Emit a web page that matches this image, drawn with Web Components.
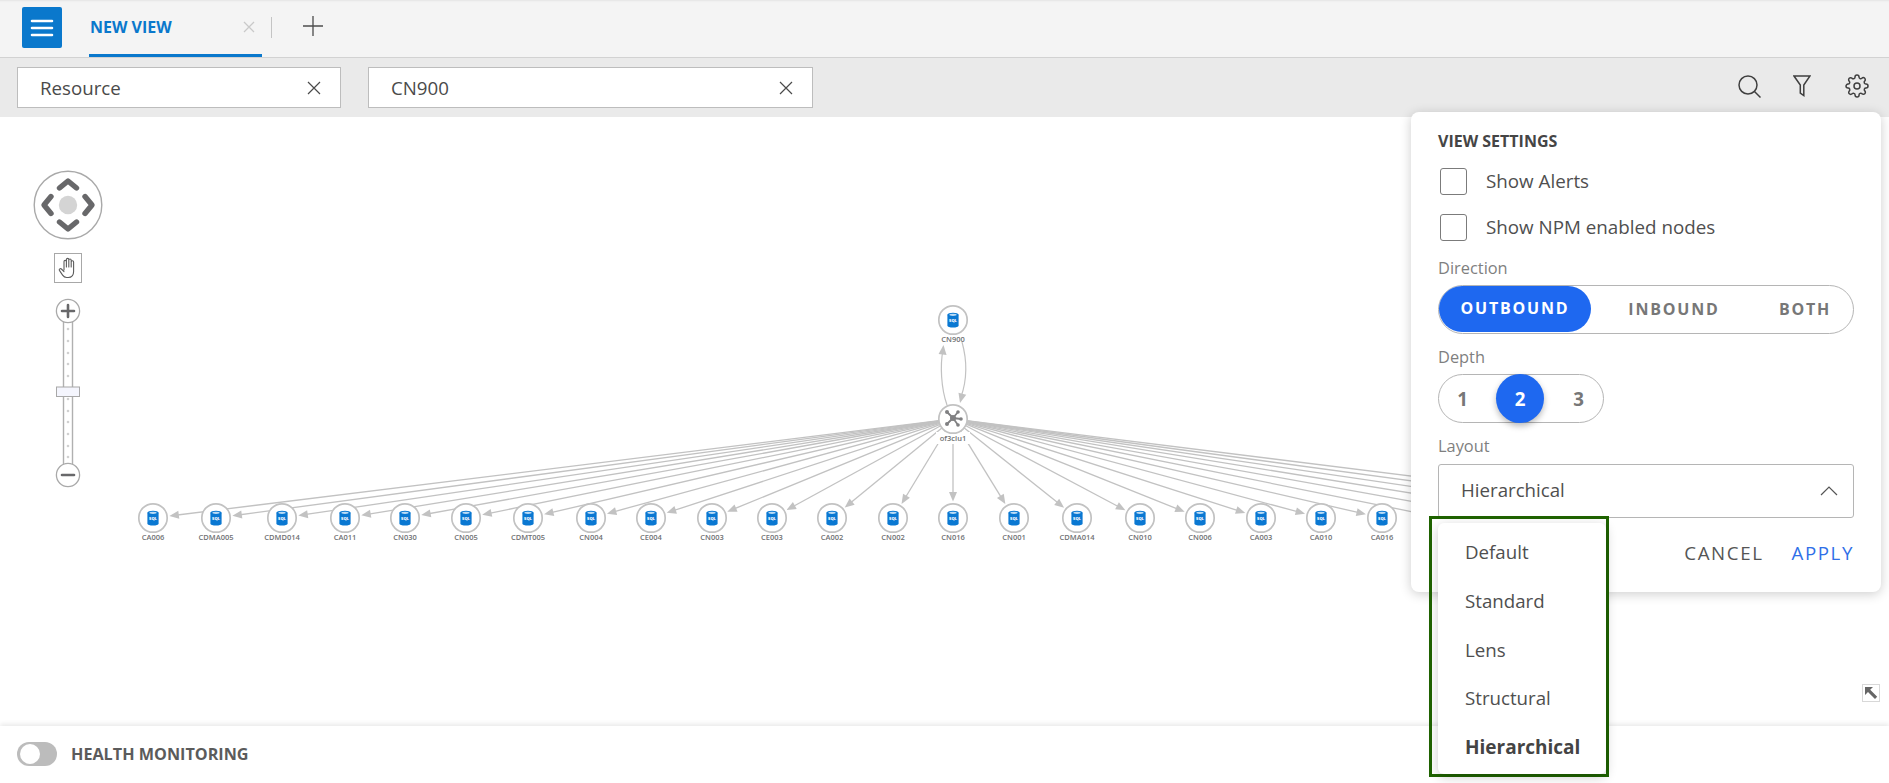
<!DOCTYPE html>
<html>
<head>
<meta charset="utf-8">
<title>New View</title>
<style>
  html, body { margin: 0; height: 100%; overflow: hidden; }
  body { font-family: "Open Sans", "Noto Sans", sans-serif; color: #4a4a4a; background: #fff; }
</style>
</head>
<body>
<topo-app></topo-app>
<script>
const FONT = `"Open Sans", "Noto Sans", sans-serif`;

function component(name, html, setup) {
  const template = Object.assign(document.createElement('template'), { innerHTML: html });
  customElements.define(name, class extends HTMLElement {
    constructor() {
      super();
      this.attachShadow({ mode: 'open' });
      this.shadowRoot.appendChild(template.content.cloneNode(true));
    }
    connectedCallback() {
      if (setup) setup(this);
    }
  });
}

component('tab-bar', `
  <style>
    :host { display: flex; align-items: flex-start; height: 57px; box-sizing: content-box;
      background: #f4f4f4; border-bottom: 1px solid #d2d2d2; padding-left: 22px;
      box-shadow: inset 0 3px 2px -2px #e4e4e4; }
    .menu { width: 40px; height: 41px; margin-top: 7px; background: #0a78cc; border-radius: 2px;
      display: flex; align-items: center; justify-content: center; }
    .tab { width: 173px; height: 57px; box-sizing: border-box; margin-left: 27px; padding: 16px 0 0 1px;
      border-bottom: 3px solid #0a78cc; color: #0a78cc; font: 700 16px/22px ${FONT}; position: relative; }
    .close { margin: 21px 0 0 -19px; width: 12px; height: 12px; position: relative; }
    .sep { width: 1px; height: 21px; background: #c4c4c4; margin: 17px 0 0 16px; }
    .plus { margin: 16px 0 0 31px; width: 20px; height: 20px; }
  </style>
  <div class="menu">
    <svg width="24" height="20" viewBox="0 0 24 20"><path d="M2 3h20M2 10h20M2 17h20" stroke="#fff" stroke-width="2.6" stroke-linecap="round"/></svg>
  </div>
  <div class="tab">NEW VIEW</div>
  <svg class="close" viewBox="0 0 12 12"><path d="M1 1l10 10M11 1L1 11" stroke="#c9c9c9" stroke-width="1.3"/></svg>
  <div class="sep"></div>
  <svg class="plus" viewBox="0 0 20 20"><path d="M0 10h20M10 0v20" stroke="#4c4c4c" stroke-width="1.3"/></svg>
`);

component('filter-chip', `
  <style>
    :host { display: flex; align-items: center; justify-content: space-between; height: 41px;
      box-sizing: border-box; background: #fff; border: 1px solid #bdbdbd; padding: 0 19px 0 22px;
      font: 400 18.7px/24px ${FONT}; color: #4a4a4a; }
    svg { width: 14px; height: 14px; }
  </style>
  <slot></slot>
  <svg viewBox="0 0 14 14"><path d="M1 1l12 12M13 1L1 13" stroke="#4a4a4a" stroke-width="1.2"/></svg>
`);

component('filter-bar', `
  <style>
    :host { display: flex; align-items: center; height: 59px; box-sizing: border-box; background: #eaeaea; padding: 0 20px 0 17px; }
    filter-chip:nth-of-type(1) { width: 324px; }
    filter-chip:nth-of-type(2) { width: 445px; margin-left: 27px; }
    .tools { margin-left: auto; display: flex; align-items: center; gap: 34px; margin-top: -3px; }
    .tools svg:first-child { margin-right: -2px; }
    svg { display: block; fill: none; stroke: #3f3f3f; stroke-width: 1.5; }
  </style>
  <filter-chip>Resource</filter-chip>
  <filter-chip>CN900</filter-chip>
  <div class="tools">
    <svg width="23" height="23" viewBox="0 0 23 23"><circle cx="10" cy="10" r="9"/><path d="M16.500 16.500l6 6"/></svg>
    <svg width="18" height="22" viewBox="0 0 18 22"><path d="M1 1h16l-6.200 9v10.500L7.300 18v-8z"/></svg>
    <svg width="24" height="24" viewBox="0 0 24 24" stroke-width="1.4"><circle cx="12" cy="12" r="3"/><path d="M19.4 15a1.65 1.65 0 0 0 .33 1.82l.06.06a2 2 0 0 1 0 2.83 2 2 0 0 1-2.83 0l-.06-.06a1.65 1.65 0 0 0-1.82-.33 1.65 1.65 0 0 0-1 1.51V21a2 2 0 0 1-2 2 2 2 0 0 1-2-2v-.09A1.65 1.65 0 0 0 9 19.4a1.65 1.65 0 0 0-1.82.33l-.06.06a2 2 0 0 1-2.83 0 2 2 0 0 1 0-2.83l.06-.06a1.65 1.65 0 0 0 .33-1.82 1.65 1.65 0 0 0-1.51-1H3a2 2 0 0 1-2-2 2 2 0 0 1 2-2h.09A1.65 1.65 0 0 0 4.6 9a1.65 1.65 0 0 0-.33-1.82l-.06-.06a2 2 0 0 1 0-2.83 2 2 0 0 1 2.83 0l.06.06a1.65 1.65 0 0 0 1.82.33H9a1.65 1.65 0 0 0 1-1.51V3a2 2 0 0 1 2-2 2 2 0 0 1 2 2v.09a1.65 1.65 0 0 0 1 1.51 1.65 1.65 0 0 0 1.82-.33l.06-.06a2 2 0 0 1 2.83 0 2 2 0 0 1 0 2.83l-.06.06a1.65 1.65 0 0 0-.33 1.82V9a1.65 1.65 0 0 0 1.51 1H21a2 2 0 0 1 2 2 2 2 0 0 1-2 2h-.09a1.65 1.65 0 0 0-1.51 1z"/></svg>
  </div>
`);

// graph coordinates are relative to the canvas, which starts at y=117
const TOP = 117;
const HUB = { x: 953, y: 419 - TOP };
const ROW_Y = 518 - TOP;
const LEAVES = [
  ['CA006', 153], ['CDMA005', 216], ['CDMD014', 282], ['CA011', 345], ['CN030', 405], ['CN005', 466],
  ['CDMT005', 528], ['CN004', 591], ['CE004', 651], ['CN003', 712], ['CE003', 772], ['CA002', 832],
  ['CN002', 893], ['CN016', 953], ['CN001', 1014], ['CDMA014', 1077], ['CN010', 1140], ['CN006', 1200],
  ['CA003', 1261], ['CA010', 1321], ['CA016', 1382],
];
// these run on under the settings panel
const HIDDEN_TARGETS = [1443, 1504, 1565, 1626, 1687, 1748];
const EDGE = '#c2c2c2';

function arrow(tx, ty, ux, uy) {
  const len = 9.5, half = 4;
  const bx = tx - ux * len, by = ty - uy * len;
  return `<polygon points="${tx},${ty} ${bx - uy * half},${by + ux * half} ${bx + uy * half},${by - ux * half}" fill="${EDGE}"/>`;
}

function edgeTo(x, y) {
  const dx = x - HUB.x, dy = y - HUB.y, d = Math.hypot(dx, dy);
  const ux = dx / d, uy = dy / d;
  const sx = HUB.x + ux * 14, sy = HUB.y + uy * 14;
  const tx = x - ux * 16.5, ty = y - uy * 16.5;
  return `<line x1="${sx}" y1="${sy}" x2="${tx - ux * 6}" y2="${ty - uy * 6}" stroke="${EDGE}" stroke-width="1.3"/>` + arrow(tx, ty, ux, uy);
}

function dbNode(label, x, y) {
  return `<g transform="translate(${x} ${y})">
    <circle r="14.2" fill="#fff" stroke="#c2c2c2" stroke-width="1.7"/>
    <path d="M-5.600 -5.200v10.600c0 1.300 2.500 2.200 5.600 2.200s5.600-.9 5.600-2.200v-10.600z" fill="#0a78d2"/>
    <ellipse cy="-5.2" rx="5.6" ry="2.1" fill="#0a78d2"/>
    <ellipse cy="-5.2" rx="3.6" ry="1.1" fill="#bcdcf5"/>
    <text y="1.8" text-anchor="middle" font-size="4" font-weight="800" fill="#fff">SQL</text>
    <text y="21.8" text-anchor="middle" font-size="7.5" font-weight="600" fill="#6f7173">${label}</text>
  </g>`;
}

component('topo-graph', `
  <style>
    :host { display: block; position: absolute; inset: 0; }
    svg { display: block; width: 100%; height: 100%; font-family: ${FONT}; }
  </style>
  <svg></svg>
`, (el) => {
  const edges = LEAVES.map(([, x]) => edgeTo(x, ROW_Y)).join('') +
    HIDDEN_TARGETS.map((x) => edgeTo(x, ROW_Y)).join('');
  const loops = `
    <path d="M947 ${405 - TOP}C941 ${388 - TOP} 940 ${365 - TOP} 943 ${350 - TOP}" fill="none" stroke="${EDGE}" stroke-width="1.2"/>
    ${arrow(943.5, 345 - TOP, 0.1, -1)}
    <path d="M962 ${342 - TOP}C967 ${360 - TOP} 967 ${380 - TOP} 961 ${397 - TOP}" fill="none" stroke="${EDGE}" stroke-width="1.2"/>
    ${arrow(960, 403 - TOP, -0.25, 0.97)}`;
  const hub = `<g transform="translate(${HUB.x} ${HUB.y})">
    <rect x="-17" y="13" width="34" height="12" fill="#fff"/>
    <circle r="14.2" fill="#fff" stroke="#c2c2c2" stroke-width="1.7"/>
    <g transform="translate(0 -1)" fill="#808082">
      <path d="M-6 -6L0 0M5 -6L0 0M-6 6L0 0M5 7L0 0M0 0L8 1" stroke="#808082" stroke-width="1.8"/>
      <circle r="3"/>
      <circle cx="-6" cy="-6" r="2"/><circle cx="5" cy="-6" r="1.800"/>
      <circle cx="-6" cy="6" r="2"/><circle cx="5" cy="7" r="1.800"/>
      <circle cx="8" cy="1" r="1.800"/>
    </g>
    <text y="21.8" text-anchor="middle" font-size="7.5" font-weight="600" fill="#6f7173">of3clu1</text>
  </g>`;
  const nodes = LEAVES.map(([label, x]) => dbNode(label, x, ROW_Y)).join('') + dbNode('CN900', HUB.x, 320 - TOP);
  el.shadowRoot.querySelector('svg').innerHTML = edges + loops + nodes + hub;
});

component('map-controls', `
  <style>
    :host { display: flex; flex-direction: column; align-items: center; position: absolute; left: 34px; top: 53px; width: 68px; }
    svg { display: block; }
    .hand { margin-top: 13px; width: 28px; height: 30px; box-sizing: border-box; border: 1px solid #a8a8a8; background: #fff;
      display: flex; align-items: center; justify-content: center; }
    .zoom { margin-top: 15px; }
  </style>
  <svg width="70" height="70" viewBox="0 0 70 70">
    <circle cx="35" cy="35" r="33.800" fill="#fff" stroke="#a9a9a9" stroke-width="1.4"/>
    <circle cx="35" cy="35" r="9.200" fill="#d4d4d4"/>
    <path d="M26.500 18l8.500-7 8.500 7M26.500 52l8.500 7 8.500-7M18 26.500l-7 8.500 7 8.500M52 26.500l7 8.500-7 8.500" fill="none" stroke="#68686a" stroke-width="5.400" stroke-linecap="round" stroke-linejoin="round"/>
  </svg>
  <div class="hand">
    <svg width="20" height="22" viewBox="0 0 20 22" fill="none" stroke="#5c5c5c" stroke-width="1.1" stroke-linejoin="round" stroke-linecap="round">
      <path d="M6 13V4.600a1.200 1.200 0 0 1 2.400 0V10M8.400 10V2.600a1.200 1.200 0 0 1 2.400 0V10M10.800 10V3.200a1.200 1.200 0 0 1 2.400 0V10M13.200 10V5a1.200 1.200 0 0 1 2.400 0v9.500c0 3.600-2.200 6-5.400 6H8.600c-1.800 0-3-.9-4-2.400L1.400 13.400c-.7-1.200 1-2.400 2-1.400L6 14.600"/>
    </svg>
  </div>
  <svg class="zoom" width="28" height="192" viewBox="0 0 28 192">
    <rect x="9.500" y="10" width="9" height="172" fill="#fff" stroke="#b0b0b0" stroke-width="1.4"/>
    <g fill="#d0d0d0">
      <circle cx="14" cy="31" r="1.300"/><circle cx="14" cy="43" r="1.300"/><circle cx="14" cy="55" r="1.300"/><circle cx="14" cy="66" r="1.300"/><circle cx="14" cy="78" r="1.300"/>
      <circle cx="14" cy="101" r="1.300"/><circle cx="14" cy="113" r="1.300"/><circle cx="14" cy="124" r="1.300"/><circle cx="14" cy="136" r="1.300"/><circle cx="14" cy="148" r="1.300"/><circle cx="14" cy="159" r="1.300"/>
    </g>
    <rect x="2.500" y="89" width="23" height="9.500" fill="#f4f5fd" stroke="#a8a8a8" stroke-width="1"/>
    <circle cx="14" cy="13" r="11.600" fill="#fff" stroke="#a9a9a9" stroke-width="1.3"/>
    <path d="M8 13h12M14 7v12" stroke="#68686a" stroke-width="2.600" stroke-linecap="round"/>
    <circle cx="14" cy="177" r="11.600" fill="#fff" stroke="#a9a9a9" stroke-width="1.3"/>
    <path d="M8 177h12" stroke="#68686a" stroke-width="2.600" stroke-linecap="round"/>
  </svg>
`);

component('expand-corner', `
  <style>
    :host { display: block; position: absolute; right: 9px; bottom: 24px; width: 18px; height: 18px; box-sizing: border-box;
      border: 1px solid #d8d8d8; background: #fff; }
    svg { display: block; }
  </style>
  <svg width="16" height="16" viewBox="0 0 16 16"><path d="M2 2h8l-2.800 2.800 7 7-2.200 2.200-7-7L2 10z" fill="#666"/></svg>
`);

component('settings-check', `
  <style>
    :host { display: flex; align-items: center; height: 27px; padding-left: 2px; font: 400 18.8px/24px ${FONT}; color: #4f4f4f; }
    i { width: 27px; height: 27px; box-sizing: border-box; border: 1px solid #7b7b7b; border-radius: 3px; margin-right: 19px; flex: none; }
    span { margin-top: -2px; }
  </style>
  <i></i><span><slot></slot></span>
`);

component('settings-panel', `
  <style>
    :host { display: block; position: absolute; left: 1411px; top: 112px; width: 470px; height: 480px; box-sizing: border-box;
      background: #fff; border-radius: 8px; box-shadow: 0 2px 12px rgba(0,0,0,.2); padding: 17px 27px 0; }
    h2 { margin: 0; font: 700 16px/24px ${FONT}; color: #454545; }
    settings-check { margin-top: 15px; }
    settings-check + settings-check { margin-top: 19px; }
    .label { font: 400 16.4px/20px ${FONT}; color: #7f7f7f; }
    .dir-label { margin-top: 17px; }
    .pill { display: flex; box-sizing: border-box; border: 1px solid #b5b5b5; height: 49px; border-radius: 25px; margin-top: 7px; padding: 0;
      font: 700 16px/47px ${FONT}; letter-spacing: 1.8px; color: #777; text-align: center; }
    .pill span { display: block; }
    .on { background: #1e68f0; color: #fff; border-radius: 24px; }
    .dir .on { width: 152px; height: 46px; line-height: 45px; margin-left: 0; }
    .dir span:nth-child(2) { width: 166px; }
    .dir span:nth-child(3) { width: 96px; }
    .depth-label { margin-top: 13px; }
    .depth { width: 166px; font-size: 18.7px; letter-spacing: 0; margin-top: 7px; }
    .depth span { width: 47px; }
    .depth .on { margin: -1px 11px 0 10px; height: 49px; line-height: 49px; width: 48px; border-radius: 50%; box-shadow: 0 3px 6px rgba(0,0,0,.28); }
    .layout-label { margin-top: 13px; }
    .select { display: flex; align-items: center; justify-content: space-between; box-sizing: border-box; height: 54px; margin-top: 8px;
      border: 1px solid #b5b5b5; border-radius: 3px; padding: 0 15px 2px 22px; font: 400 18.7px/24px ${FONT}; color: #4f4f4f; }
    .actions { display: flex; justify-content: flex-end; gap: 28px; margin-top: 23px; font: 400 18.7px/24px ${FONT}; letter-spacing: 1.6px; color: #555; }
    .apply { color: #2f6fe8; }
  </style>
  <h2>VIEW SETTINGS</h2>
  <settings-check>Show Alerts</settings-check>
  <settings-check>Show NPM enabled nodes</settings-check>
  <div class="label dir-label">Direction</div>
  <div class="pill dir"><span class="on">OUTBOUND</span><span>INBOUND</span><span>BOTH</span></div>
  <div class="label depth-label">Depth</div>
  <div class="pill depth"><span>1</span><span class="on">2</span><span>3</span></div>
  <div class="label layout-label">Layout</div>
  <div class="select">Hierarchical
    <svg width="18" height="11" viewBox="0 0 18 11"><path d="M1 10l8-8 8 8" fill="none" stroke="#555" stroke-width="1.2"/></svg>
  </div>
  <div class="actions"><span>CANCEL</span><span class="apply">APPLY</span></div>
`);

component('layout-menu', `
  <style>
    :host { display: block; position: absolute; left: 1429px; top: 516px; width: 180px; height: 261px; box-sizing: border-box;
      border: 3px solid #1f6300; padding: 4px 0 0 6px; z-index: 2; }
    .list { width: 168px; height: 251px; box-sizing: border-box; background: #fff; border-radius: 6px; box-shadow: 0 3px 12px rgba(0,0,0,.2);
      padding: 5px 0 0 27px; font: 400 18.7px/24px ${FONT}; color: #4f4f4f; }
    div div { height: 48.8px; line-height: 48.8px; }
    b { font-weight: 700; color: #444; font-size: 19px; }
  </style>
  <div class="list">
    <div>Default</div><div>Standard</div><div>Lens</div><div>Structural</div><div><b>Hierarchical</b></div>
  </div>
`);

component('health-footer', `
  <style>
    :host { display: flex; align-items: center; height: 57px; box-sizing: border-box; background: #fff; padding: 0 0 1px 17px;
      box-shadow: 0 -2px 5px rgba(0,0,0,.09); position: relative; font: 700 16.2px/22px ${FONT}; color: #5b5b5b; }
    .switch { width: 40px; height: 24px; border-radius: 12px; background: #bcbcbc; margin-right: 14px; display: flex; align-items: center; padding-left: 3px; box-sizing: border-box; }
    .switch i { width: 20px; height: 20px; background: #fff; border-radius: 50%; }
  </style>
  <div class="switch"><i></i></div>
  HEALTH MONITORING
`);

component('topo-canvas', `
  <style>
    :host { display: block; flex: 1; position: relative; background: #fff; overflow: hidden; }
  </style>
  <topo-graph></topo-graph>
  <map-controls></map-controls>
  <expand-corner></expand-corner>
`);

component('topo-app', `
  <style>
    :host { display: flex; flex-direction: column; height: 100vh; position: relative; }
  </style>
  <tab-bar></tab-bar>
  <filter-bar></filter-bar>
  <topo-canvas></topo-canvas>
  <health-footer></health-footer>
  <settings-panel></settings-panel>
  <layout-menu></layout-menu>
`);
</script>
</body>
</html>
